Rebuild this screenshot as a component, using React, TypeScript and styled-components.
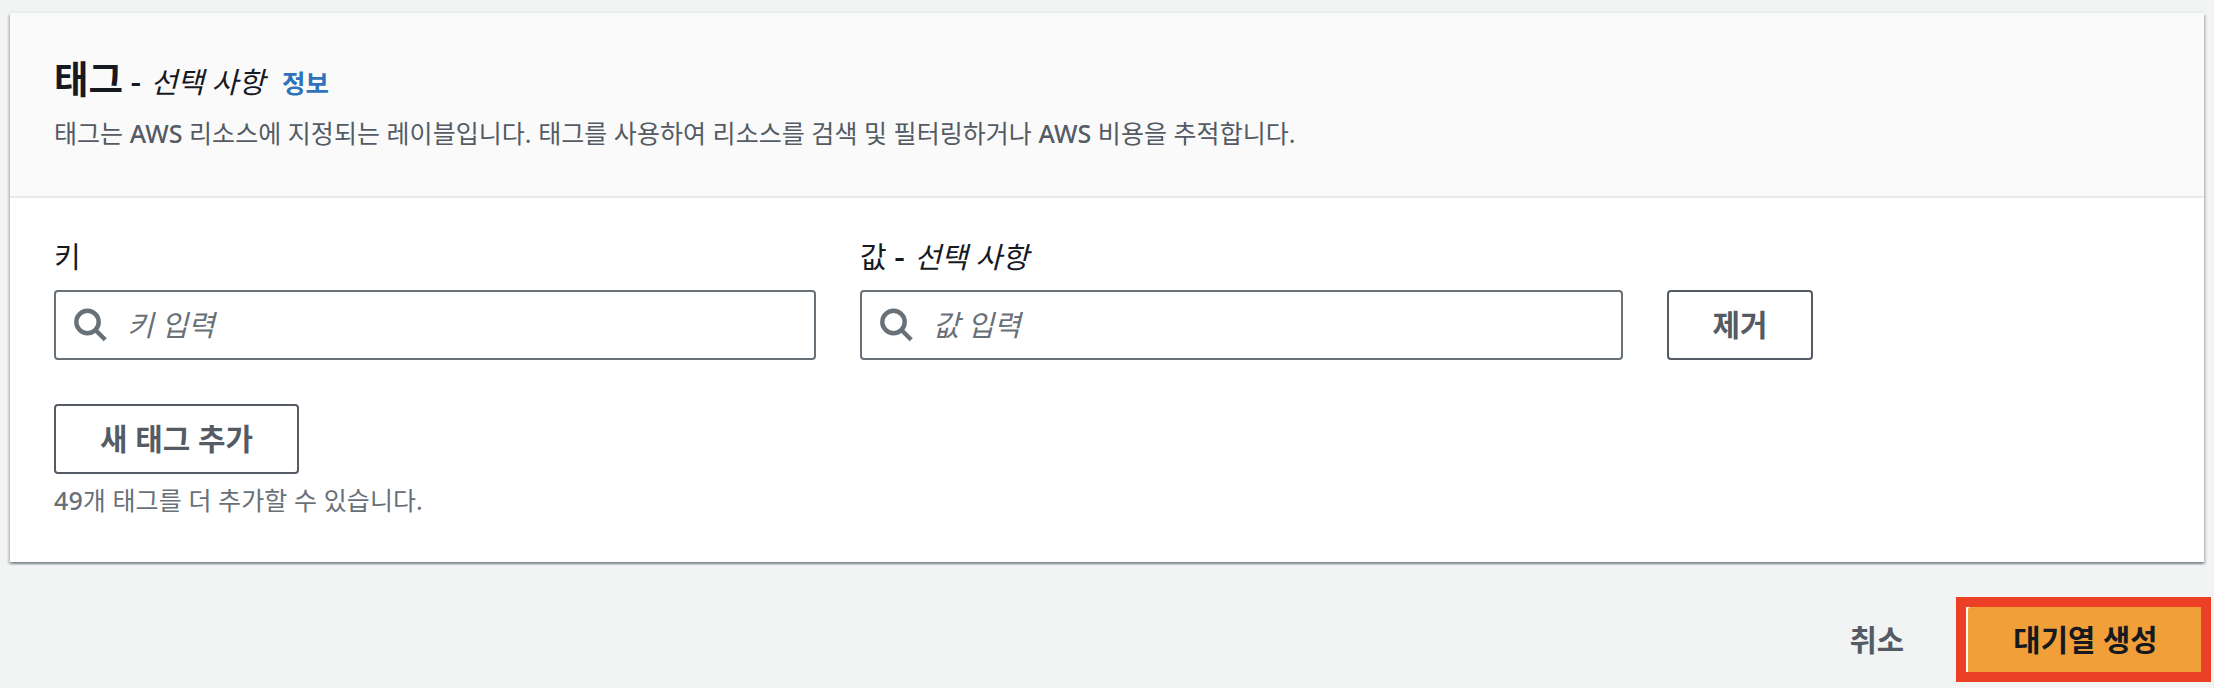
import React from "react";
import styled, { createGlobalStyle } from "styled-components";

const GlobalStyle = createGlobalStyle`
  *, *::before, *::after { box-sizing: border-box; }
  body {
    margin: 0;
    background: #f2f3f3;
    color: #16191f;
    font-family: "Noto Sans", "Noto Sans CJK KR", sans-serif;
    font-size: 29px;
    line-height: 44px;
    overflow: hidden;
  }
`;

const Page = styled.main`
  height: 688px;
  padding: 13px 0 0 10px;
  background: #f2f3f3;
`;

const Panel = styled.section`
  width: 2194px;
  height: 549px;
  background: #ffffff;
  box-shadow: 0 2px 2px 0 rgba(0, 28, 36, 0.3), 2px 2px 2px 0 rgba(0, 28, 36, 0.15),
    -2px 2px 2px 0 rgba(0, 28, 36, 0.15), 0 -2px 0 0 #eaeded;
`;

const PanelHeader = styled.header`
  height: 185px;
  padding: 42px 44px 0;
  background: #fafafa;
  border-bottom: 2px solid #eaeaea;
`;

const TitleRow = styled.div`
  display: flex;
  align-items: baseline;
  height: 48px;
  line-height: 48px;
  white-space: pre;
`;

const Title = styled.h2`
  margin: 0;
  font-size: 37.5px;
  font-weight: 700;
`;

const Optional = styled.span`
  font-size: 29px;
  font-weight: 400;
  white-space: pre;
`;

const Dash = styled.span`
  margin-right: 2px;
  font-size: 33px;
  font-weight: 500;
  line-height: 1;
`;

const Latin = styled.span`
  font-weight: 500;
`;

const InfoLink = styled.a`
  margin-left: 17px;
  color: #2f73bb;
  font-size: 25.5px;
  font-weight: 700;
`;

const Description = styled.p`
  margin: 8px 0 0;
  color: #545b64;
  font-size: 25px;
  line-height: 44px;
  letter-spacing: 0.05px;
  white-space: nowrap;
`;

const PanelBody = styled.div`
  padding: 37px 44px 0;
`;

const TagRow = styled.div`
  display: flex;
  align-items: flex-end;
  gap: 44px;
`;

const Field = styled.label<{ $width: number }>`
  display: flex;
  flex-direction: column;
  gap: 11px;
  width: ${(p) => p.$width}px;
`;

const FieldLabel = styled.span`
  height: 44px;
  white-space: pre;
`;

const InputBox = styled.span`
  display: flex;
  align-items: center;
  height: 70px;
  padding: 0 18px;
  gap: 19px;
  border: 2px solid #687078;
  border-radius: 4px;
  background: #ffffff;
`;

const Input = styled.input`
  flex: 1;
  min-width: 0;
  padding: 0;
  border: 0;
  outline: 0;
  background: transparent;
  font: inherit;
  &::placeholder {
    color: #687078;
    opacity: 1;
    font-style: italic;
  }
`;

const Button = styled.button<{ $width: number }>`
  display: flex;
  align-items: center;
  justify-content: center;
  width: ${(p) => p.$width}px;
  height: 70px;
  padding: 0 0 1px;
  border: 2px solid #545b64;
  border-radius: 4px;
  background: #ffffff;
  color: #545b64;
  font: inherit;
  font-size: 29.9px;
  font-weight: 700;
`;

const AddTag = styled.div`
  margin-top: 44px;
`;

const Hint = styled.p`
  margin: 4px 0 0;
  color: #687078;
  font-size: 25px;
  line-height: 44px;
  letter-spacing: 0.1px;
`;

const Actions = styled.footer`
  display: flex;
  justify-content: flex-end;
  align-items: center;
  gap: 52px;
  width: 2201px;
  margin-top: 35px;
`;

const CancelButton = styled.button`
  padding: 0;
  border: 0;
  background: transparent;
  color: #545b64;
  font: inherit;
  font-size: 29.7px;
  font-weight: 700;
`;

const Highlight = styled.div`
  width: 255px;
  height: 85px;
  padding-left: 2px;
  border: 10px solid #eb4026;
  background: #f8f4f0;
`;

const PrimaryButton = styled.button`
  width: 233px;
  height: 65px;
  padding: 0 0 0 2px;
  border: 0;
  border-radius: 3px 0 0 0;
  background: #f19f38;
  color: #16191f;
  font: inherit;
  font-size: 29.7px;
  font-weight: 700;
`;

const SearchIcon = () => (
  <svg width="34" height="34" viewBox="0 0 34 34" fill="none" stroke="#687078" strokeWidth="4.4">
    <circle cx="13.5" cy="14" r="11.2" />
    <path d="M21.5 22 L31.2 31.7" />
  </svg>
);

const OptionalMark = () => (
  <Optional>
    {" "}<Dash>-</Dash> <em>선택 사항</em>
  </Optional>
);

const SearchField = ({ label, placeholder, optional, width }: {
  label: string;
  placeholder: string;
  optional?: boolean;
  width: number;
}) => (
  <Field $width={width}>
    <FieldLabel>
      {label}
      {optional && <OptionalMark />}
    </FieldLabel>
    <InputBox>
      <SearchIcon />
      <Input placeholder={placeholder} />
    </InputBox>
  </Field>
);

export default function App() {
  return (
    <Page>
      <GlobalStyle />
      <Panel>
        <PanelHeader>
          <TitleRow>
            <Title>태그</Title>
            <OptionalMark />
            <InfoLink>정보</InfoLink>
          </TitleRow>
          <Description>
            태그는 <Latin>AWS</Latin> 리소스에 지정되는 레이블입니다. 태그를 사용하여 리소스를 검색 및 필터링하거나{" "}
            <Latin>AWS</Latin> 비용을 추적합니다.
          </Description>
        </PanelHeader>
        <PanelBody>
          <TagRow>
            <SearchField label="키" placeholder="키 입력" width={762} />
            <SearchField label="값" placeholder="값 입력" optional width={763} />
            <Button $width={146}>제거</Button>
          </TagRow>
          <AddTag>
            <Button $width={245}>새 태그 추가</Button>
            <Hint><Latin>49</Latin>개 태그를 더 추가할 수 있습니다.</Hint>
          </AddTag>
        </PanelBody>
      </Panel>
      <Actions>
        <CancelButton>취소</CancelButton>
        <Highlight>
          <PrimaryButton>대기열 생성</PrimaryButton>
        </Highlight>
      </Actions>
    </Page>
  );
}
